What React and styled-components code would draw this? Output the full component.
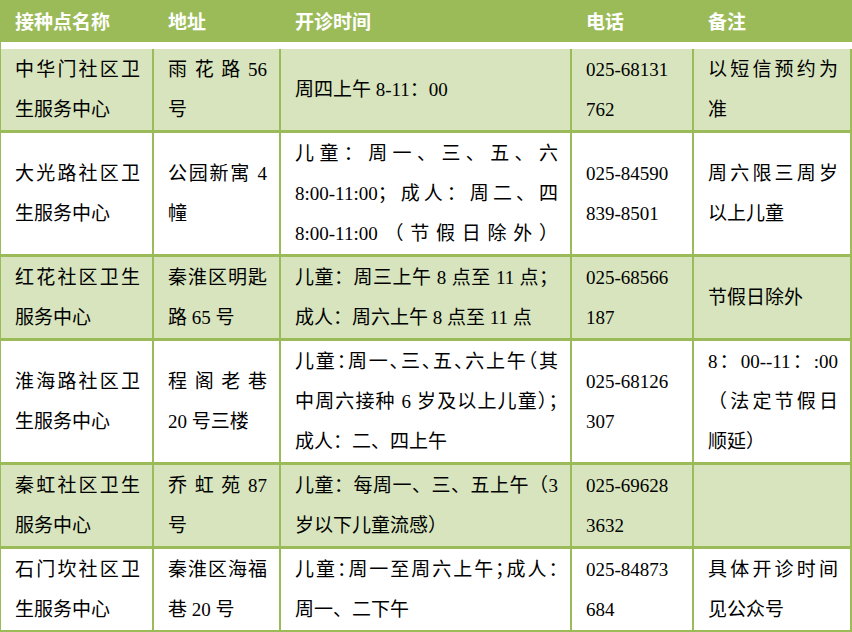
import React from "react"
import styled, { createGlobalStyle } from "styled-components"

const GREEN = "#9bbb59"
const LIGHT = "#d7e4bd"

const GlobalStyle = createGlobalStyle`
  html, body {
    margin: 0;
    padding: 0;
    background: #fff;
  }
`

const Sheet = styled.div`
  display: grid;
  grid-template-columns: 154px 127px 291px 122px 158px;
  width: 852px;
  font-family: "Liberation Serif", "Noto Sans CJK SC", serif;
  font-size: 19px;
  color: #000;
`

const HeadCell = styled.div`
  box-sizing: border-box;
  height: 49px;
  padding: 4px 12px 0 14px;
  line-height: 38px;
  background: linear-gradient(${GREEN}, ${GREEN}) top / 100% 42px no-repeat;
  border-left: ${p => (p.$first ? "1px" : "0")} solid ${GREEN};
  color: #fff;
  font-weight: bold;
`

const Cell = styled.div`
  box-sizing: border-box;
  display: flex;
  flex-direction: column;
  justify-content: center;
  padding: 1px 12px 0 14px;
  line-height: 40px;
  background: ${p => (p.$shade ? LIGHT : "#fff")};
  border-right: 2px solid ${GREEN};
  border-bottom: 3px solid ${GREEN};
  border-left: ${p => (p.$first ? "1px" : "0")} solid ${GREEN};
`

const Line = styled.div`
  text-align: left;
  text-align-last: ${p => (p.$fill ? "justify" : "auto")};
  font-feature-settings: ${p => (p.$halt ? '"halt" 1' : "normal")};
`

// f = stretch the line over the cell, h = also squeeze the punctuation
const f = t => ({ t, fill: true })
const h = t => ({ t, fill: true, halt: true })

const head = ["接种点名称", "地址", "开诊时间", "电话", "备注"]

const rows = [
  [
    [f("中华门社区卫"), "生服务中心"],
    [f("雨花路56"), "号"],
    ["周四上午 8-11：00"],
    ["025-68131", "762"],
    [f("以短信预约为"), "准"],
  ],
  [
    [f("大光路社区卫"), "生服务中心"],
    [f("公园新寓 4"), "幢"],
    [f("儿童：周一、三、五、六"), f("8:00-11:00；成人：周二、四"), f("8:00-11:00（节假日除外）")],
    ["025-84590", "839-8501"],
    [f("周六限三周岁"), "以上儿童"],
  ],
  [
    [f("红花社区卫生"), "服务中心"],
    [f("秦淮区明匙"), "路 65 号"],
    [f("儿童：周三上午 8 点至 11 点；"), "成人：周六上午 8 点至 11 点"],
    ["025-68566", "187"],
    ["节假日除外"],
  ],
  [
    [f("淮海路社区卫"), "生服务中心"],
    [f("程阁老巷"), "20 号三楼"],
    [h("儿童：周一、三、五、六上午（其"), h("中周六接种 6 岁及以上儿童）；"), "成人：二、四上午"],
    ["025-68126", "307"],
    [f("8：00--11：:00"), f("（法定节假日"), "顺延）"],
  ],
  [
    [f("秦虹社区卫生"), "服务中心"],
    [f("乔虹苑87"), "号"],
    [f("儿童：每周一、三、五上午（3"), "岁以下儿童流感）"],
    ["025-69628", "3632"],
    [],
  ],
  [
    [f("石门坎社区卫"), "生服务中心"],
    [f("秦淮区海福"), "巷 20 号"],
    [h("儿童：周一至周六上午；成人："), "周一、二下午"],
    ["025-84873", "684"],
    [f("具体开诊时间"), "见公众号"],
  ],
]

export default function App() {
  return (
    <>
      <GlobalStyle />
      <Sheet>
        {head.map((label, i) => (
          <HeadCell key={label} $first={i === 0}>{label}</HeadCell>
        ))}
        {rows.map((row, r) =>
          row.map((lines, c) => (
            <Cell key={r + "-" + c} $shade={r % 2 === 0} $first={c === 0}>
              {lines.map((ln, k) =>
                typeof ln === "string" ? (
                  <Line key={k}>{ln}</Line>
                ) : (
                  <Line key={k} $fill={ln.fill} $halt={ln.halt}>{ln.t}</Line>
                )
              )}
            </Cell>
          ))
        )}
      </Sheet>
    </>
  )
}
